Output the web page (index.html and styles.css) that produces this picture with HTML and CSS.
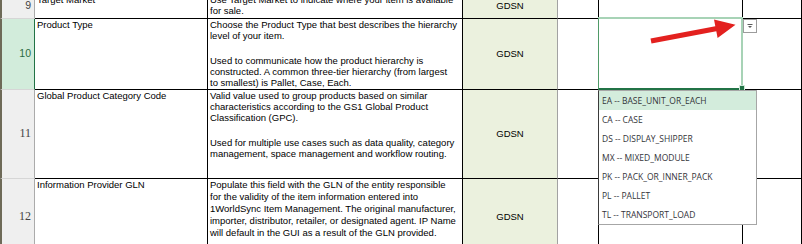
FILE: index.html
```html
<!DOCTYPE html>
<html>
<head>
<meta charset="utf-8">
<link rel="stylesheet" href="styles.css">
</head>
<body>
<div class="sheet">
  <div class="hdr">9</div>
  <div class="c a">Target Market</div>
  <div class="c b">Use Target Market to indicate where your item is available<br>for sale.</div>
  <div class="c gd">GDSN</div>
  <div class="c d"></div>
  <div class="c e"></div>
  <div class="c f"></div>

  <div class="hdr sel">10</div>
  <div class="c a">Product Type</div>
  <div class="c b"><p>Choose the Product Type that best describes the hierarchy<br>level of your item.</p><p class="gap">Used to communicate how the product hierarchy is<br>constructed. A common three-tier hierarchy (from largest<br>to smallest) is Pallet, Case, Each.</p></div>
  <div class="c gd">GDSN</div>
  <div class="c d"></div>
  <div class="c e active">
    <div class="selbox"></div>
    <div class="handle"></div>
    <div class="ddbtn"><svg width="12" height="12" viewBox="0 0 12 12"><path d="M3.5 4.5h5" stroke="#5a5a5a" stroke-width="1"/><path d="M4 6h4l-2 2z" fill="#5a5a5a"/></svg></div>
    <svg class="arrow" width="100" height="35" viewBox="640 15 100 35"><polygon points="650.5,38.5 715.3,26.2 714,19.4 735.5,24.8 717.6,38 716.3,31.2 651.5,43.5" fill="#e3211f"/></svg>
    <ul class="list">
      <li class="hi">EA -- BASE_UNIT_OR_EACH</li>
      <li>CA -- CASE</li>
      <li>DS -- DISPLAY_SHIPPER</li>
      <li>MX -- MIXED_MODULE</li>
      <li>PK -- PACK_OR_INNER_PACK</li>
      <li>PL -- PALLET</li>
      <li>TL -- TRANSPORT_LOAD</li>
    </ul>
  </div>
  <div class="c f"></div>

  <div class="hdr serif">11</div>
  <div class="c a">Global Product Category Code</div>
  <div class="c b"><p>Valid value used to group products based on similar<br>characteristics according to the GS1 Global Product<br>Classification (GPC).</p><p class="gap">Used for multiple use cases such as data quality, category<br>management, space management and workflow routing.</p></div>
  <div class="c gd">GDSN</div>
  <div class="c d"></div>
  <div class="c e"></div>
  <div class="c f"></div>

  <div class="hdr serif">12</div>
  <div class="c a">Information Provider GLN</div>
  <div class="c b tall">Populate this field with the GLN of the entity responsible<br>for the validity of the item information entered into<br>1WorldSync Item Management. The original manufacturer,<br>importer, distributor, retailer, or designated agent. IP Name<br>will default in the GUI as a result of the GLN provided.</div>
  <div class="c gd">GDSN</div>
  <div class="c d"></div>
  <div class="c e"></div>
  <div class="c f"></div>
</div>
</body>
</html>
```

FILE: styles.css
```css
html, body {
  margin: 0;
  padding: 0;
  background: #ffffff;
  overflow: hidden;
  width: 802px;
  height: 244px;
}
.sheet {
  display: grid;
  grid-template-columns: 35px 173px 255px 95px 41px 144px 1fr;
  grid-template-rows: 25px 71px 89px 77px;
  margin-top: -6px;
  font-family: "Liberation Sans", Arial, sans-serif;
  font-size: 9.5px;
  line-height: 11.2px;
  color: #000;
}
.sheet p {
  margin: 0;
}
.sheet p.gap {
  margin-top: 14px;
}
.c {
  box-sizing: border-box;
  border-right: 1px solid #000;
  border-bottom: 1px solid #000;
  white-space: nowrap;
  overflow: visible;
}
.a {
  padding: 0 0 0 2px;
}
.b {
  padding: 0 0 0 2px;
  margin-top: -0.5px;
}
.b.tall {
  line-height: 11.9px;
  margin-top: 0;
}
.gd {
  background: #ebf1de;
  border-right-color: #a2a2a2;
  display: flex;
  align-items: center;
  justify-content: center;
}
.hdr {
  box-sizing: border-box;
  border-left: 2px solid #6e6a58;
  border-right: 1px solid #ababab;
  border-bottom: 1px solid #d6d6d6;
  background: #efefef;
  display: flex;
  align-items: center;
  justify-content: flex-end;
  padding-right: 3px;
  font-family: "Liberation Sans", Arial, sans-serif;
  font-size: 10.5px;
  color: #444;
}
.hdr.sel {
  background: #d2ecdb;
  border-right: 1px solid #217346;
  color: #2a6b44;
}
.hdr.serif {
  font-family: "Liberation Serif", "Times New Roman", serif;
  font-size: 12px;
  color: #444;
}
.active {
  position: relative;
}
.selbox {
  position: absolute;
  left: -1px;
  top: -2px;
  right: -1px;
  bottom: -1px;
  border-top: 2px solid #a7d3b6;
  border-left: 1px solid #4f9a67;
  border-right: 2px solid #a7d3b6;
  border-bottom: 2px solid #217346;
}
.handle {
  position: absolute;
  right: -3px;
  bottom: -2px;
  width: 4px;
  height: 4px;
  background: #217346;
  border: 1px solid #cfe8d8;
}
.ddbtn {
  position: absolute;
  left: 144px;
  top: 0;
  width: 14px;
  height: 14px;
  box-sizing: border-box;
  border: 1px solid #9c9c9c;
  background: #fff;
  display: flex;
  align-items: center;
  justify-content: center;
}
.arrow {
  position: absolute;
  left: 41px;
  top: -4px;
}
.list {
  position: absolute;
  left: -1px;
  top: 71px;
  width: 159px;
  box-sizing: border-box;
  margin: 0;
  padding: 0;
  list-style: none;
  background: #fff;
  border: 1px solid #a6a6a6;
  border-left-color: #3a3a3a;
  font-family: "Open Sans", "Noto Sans", sans-serif;
  font-size: 8.5px;
  color: #34343a;
  z-index: 2;
}
.list li {
  height: 19px;
  line-height: 19px;
  padding-left: 3px;
}
.list li.hi {
  background: #d3ecdc;
}
```
